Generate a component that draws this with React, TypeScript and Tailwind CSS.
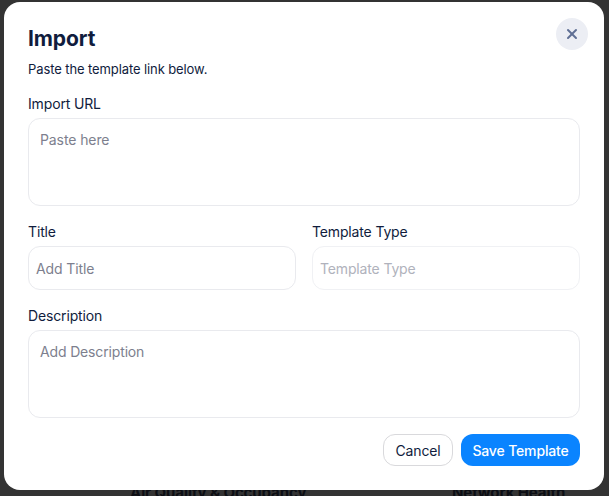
import { X } from 'lucide-react'

const font = { fontFamily: 'Inter, "Noto Sans", sans-serif' }

function Label({ children }: { children: string }) {
  return <label className="block text-[14px] leading-[20px] text-[#101c3d] tracking-[-0.15px]">{children}</label>
}

export default function App() {
  return (
    <div style={font} className="w-[609px] h-[496px] overflow-hidden bg-[#333333] pt-[2px] pl-[4px]">
      <div className="relative z-10 w-[600px] h-[488px] bg-white rounded-[16px] px-[24px] pt-[24px]">
        <div className="flex items-start justify-between h-[25px]">
          <h2 className="text-[21px] leading-[25px] font-bold text-[#101c3d] tracking-[-0.1px]">Import</h2>
          <button className="w-[32px] h-[32px] -mt-[8px] -mr-[8px] rounded-full bg-[#eceef4] flex items-center justify-center text-[#5f6f94]">
            <X size={16} strokeWidth={3} />
          </button>
        </div>
        <p className="mt-[9px] text-[13px] leading-[18px] text-[#101c3d] tracking-[-0.1px]">Paste the template link below.</p>

        <div className="mt-[16px]">
          <Label>Import URL</Label>
          <div className="mt-[4px] h-[88px] rounded-[12px] border border-[#e9eaee] px-[11px] py-[11px] text-[14px] leading-[20px] text-[#7d7f8e] tracking-[-0.1px]">
            Paste here
          </div>
        </div>

        <div className="mt-[16px] grid grid-cols-2 gap-[16px]">
          <div>
            <Label>Title</Label>
            <div className="mt-[4px] h-[44px] rounded-[12px] border border-[#e9eaee] px-[7px] flex items-center text-[14px] text-[#7d7f8e] tracking-[-0.1px]">
              Add Title
            </div>
          </div>
          <div>
            <Label>Template Type</Label>
            <div className="mt-[4px] h-[44px] rounded-[12px] border border-[#f0f1f4] px-[7px] flex items-center text-[14px] text-[#b0b2bc] tracking-[-0.15px]">
              Template Type
            </div>
          </div>
        </div>

        <div className="mt-[16px]">
          <Label>Description</Label>
          <div className="mt-[4px] h-[88px] rounded-[12px] border border-[#e9eaee] px-[11px] py-[11px] text-[14px] leading-[20px] text-[#7d7f8e] tracking-[-0.15px]">
            Add Description
          </div>
        </div>

        <div className="mt-[16px] flex justify-end gap-[8px]">
          <button className="w-[70px] h-[32px] rounded-[12px] border border-[#d9d9dc] bg-white text-[14px] text-[#101c3d] tracking-[-0.15px]">
            Cancel
          </button>
          <button className="w-[119px] h-[32px] rounded-[12px] bg-[#0a84ff] text-[14px] font-medium text-white tracking-[-0.15px]">
            Save Template
          </button>
        </div>
      </div>
      <div className="flex text-[15px] leading-[18px] font-bold text-[#0c0e14] -mt-[6px] tracking-[-0.1px]">
        <span className="ml-[126px] w-[322px]">Air Quality & Occupancy</span>
        <span>Network Health</span>
      </div>
    </div>
  )
}
